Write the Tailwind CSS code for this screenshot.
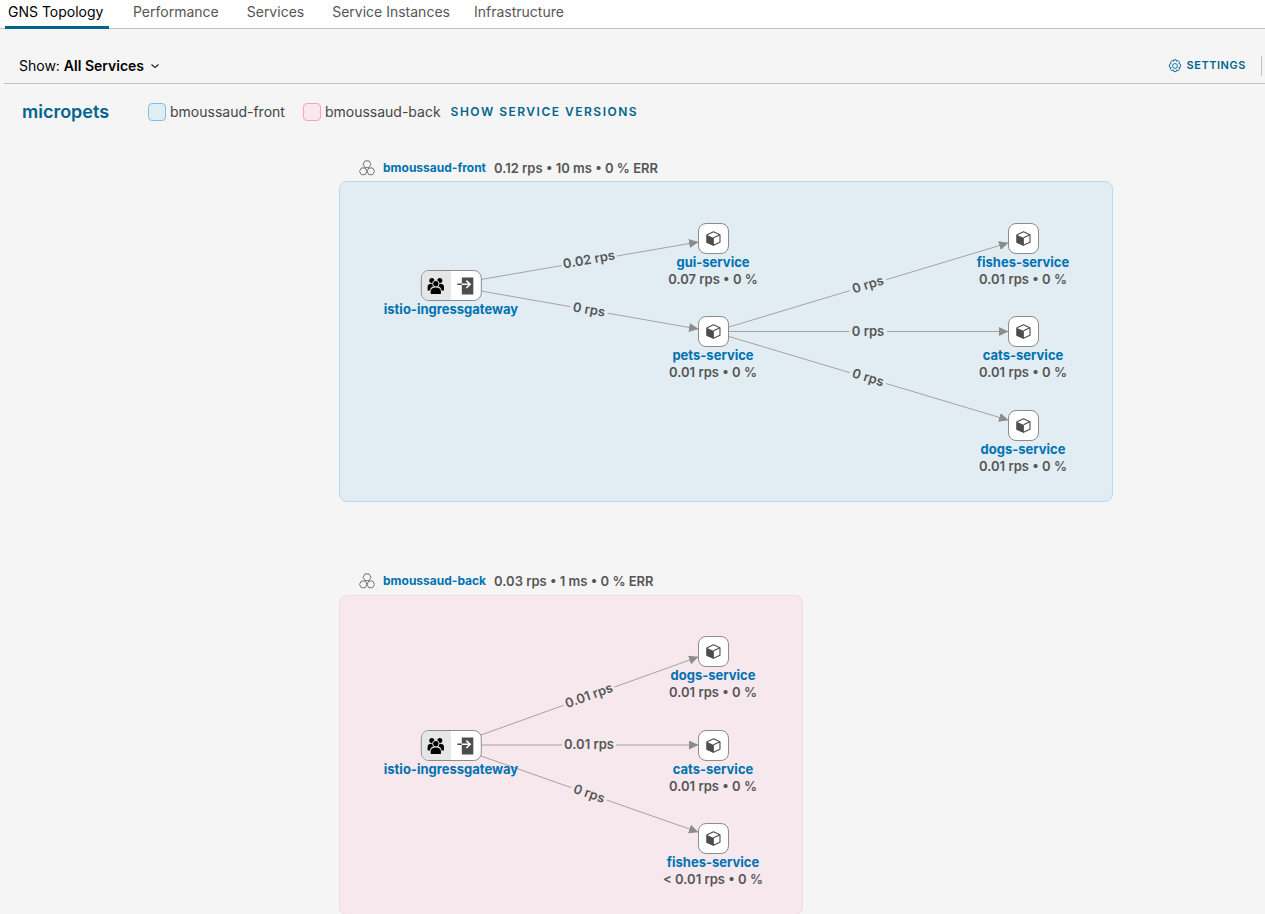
<!DOCTYPE html>
<html lang="en">
<head>
<meta charset="utf-8">
<title>GNS Topology</title>
<script src="https://cdn.jsdelivr.net/npm/@tailwindcss/browser@4"></script>
</head>
<body class="min-h-screen bg-[#f5f5f5] font-['Inter','Open_Sans',sans-serif] text-sm text-black">
<svg class="hidden" aria-hidden="true">
  <symbol id="cube" viewBox="0 0 16 16">
    <path d="M8 .9 14.9 4v8L8 15.2 1.1 12V4z" fill="none" stroke="#4d4d4d" stroke-width="1.200" stroke-linejoin="round"/>
    <path d="M.5 4 8.400 7.4V15.800L.5 12.400z" fill="#4d4d4d"/>
    <path d="M8 7.3 14.9 4" fill="none" stroke="#4d4d4d" stroke-width="1.200"/>
  </symbol>
  <symbol id="cluster" viewBox="0 0 16 16">
    <g fill="none" stroke="#737373" stroke-width="1" stroke-linejoin="round">
      <path d="M6 .9h4l2 3.4-2 3.4H6L4 4.300z"/>
      <path d="M2.300 8h3.900l1.800 3.300-1.800 3.400H2.300L.500 11.300z"/>
      <path d="M9.800 8h3.900l1.800 3.300-1.800 3.400H9.800L8 11.300z"/>
    </g>
  </symbol>
  <symbol id="users" viewBox="0 0 18 18">
    <circle cx="5" cy="3.500" r="2.500"/>
    <circle cx="13" cy="3.500" r="2.500"/>
    <path d="M.8 13.500V9.800C.8 7.800 2.300 6.800 4.500 6.800H7v2.400C4.800 9.800 3.400 11.300 3.200 13.500zM17.200 13.500V9.800c0-2-1.500-3-3.700-3H11v2.400c2.200.6 3.600 2.100 3.800 4.300z"/>
    <circle cx="9" cy="6.700" r="3.200" stroke="#e6e6e6" stroke-width="1"/>
    <path d="M3.900 17v-2.800c0-2.300 1.900-3.700 5.100-3.700s5.100 1.400 5.100 3.700V17z"/>
  </symbol>
  <symbol id="ingress" viewBox="0 0 18 18">
    <path d="M5 .5h11.500v17H5z" fill="#4d4d4d"/>
    <path d="M4.500 7.300h9M9.500 3.600l3.900 3.700-3.900 3.700" fill="none" stroke="#fff" stroke-width="1.500"/>
    <path d="M.5 7.300H5" fill="none" stroke="#4d4d4d" stroke-width="1.500"/>
  </symbol>
</svg>

<nav class="flex h-[29px] gap-5 border-b border-[#c1c1c1] bg-white pl-[5px] text-[#565656]">
  <a href="#" aria-current="page" class="h-[29px] min-w-[104px] border-b-3 border-[#00648f] px-[3px] leading-6 text-black">GNS Topology</a>
  <a href="#" class="px-1 leading-6">Performance</a>
  <a href="#" class="px-1 leading-6">Services</a>
  <a href="#" class="px-1 leading-6">Service Instances</a>
  <a href="#" class="leading-6">Infrastructure</a>
</nav>

<div class="ml-1 flex h-[55px] items-end justify-between border-b border-[#c1c1c1] pl-[15px] pr-[3px] pb-[7px]">
  <button type="button" class="flex items-center gap-[5px] leading-5">
    <span>Show: <b class="font-semibold">All Services</b></span>
    <svg class="size-3" viewBox="0 0 12 12" fill="none" stroke="#222" stroke-width="1.200"><path d="m2.500 4.500 3.500 3 3.500-3"/></svg>
  </button>
  <div class="flex h-5 items-center border-r border-[#c1c1c1] pr-[15px]">
    <button type="button" class="flex items-center gap-1 text-[11px] font-semibold tracking-wider text-[#00648f]">
      <svg class="size-[14px]" viewBox="0 0 16 16" fill="none" stroke="#00648f">
        <circle cx="8" cy="8" r="2.800"/>
        <path stroke-linejoin="round" d="M6.700.8h2.600l.5 1.900 1.700-.9 1.900 1.800-1 1.800 2 .6v3.200l-2 .6 1 1.800-1.900 1.800-1.700-.9-.5 1.900H6.700l-.5-1.900-1.700.9-1.900-1.800 1-1.800-2-.6V6l2-.6-1-1.800 1.900-1.800 1.700.9z"/>
      </svg>
      SETTINGS
    </button>
  </div>
</div>

<div class="flex h-14 items-center pl-[22px] text-[#454545]">
  <h1 class="w-[126px] text-lg font-semibold text-[#00648f]">micropets</h1>
  <span class="flex items-center gap-1"><i class="size-[18px] rounded border border-[#7cc1e3] bg-[#e1edf2]"></i>bmoussaud-front</span>
  <span class="ml-[18px] flex items-center gap-1"><i class="size-[18px] rounded border border-[#f5a6c4] bg-[#f6e8ed]"></i>bmoussaud-back</span>
  <button type="button" class="ml-[10px] text-xs font-semibold tracking-[1.5px] text-[#00648f]">SHOW SERVICE VERSIONS</button>
</div>

<main class="relative h-[774px] min-w-[1120px] overflow-hidden text-xs font-semibold text-[#565656]">
  <section class="absolute left-[339px] top-[41px] h-[321px] w-[774px] rounded-lg border border-[#b5dcee] bg-[#e1edf2]"></section>
  <section class="absolute left-[339px] top-[455px] h-[320px] w-[464px] rounded-lg border border-[#f5d9e2] bg-[#f6e8ed]"></section>

  <svg class="absolute left-0 top-0 h-[774px] w-[1120px]" viewBox="0 140 1120 774">
    <defs>
      <marker id="arrow" markerUnits="userSpaceOnUse" markerWidth="10" markerHeight="10" refX="9" refY="4.500" orient="auto"><path d="M0 0 9.500 4.500 0 9z" fill="#8c8c8c"/></marker>
    </defs>
    <g stroke="#a3a3a3" stroke-width="1">
      <path d="M481 279.500 698 242" marker-end="url(#arrow)"/>
      <path d="M481 291 698 329" marker-end="url(#arrow)"/>
      <path d="M729 327 1008 243" marker-end="url(#arrow)"/>
      <path d="M729 331.500H1008" marker-end="url(#arrow)"/>
      <path d="M729 336.500 1008 420" marker-end="url(#arrow)"/>
      <path d="M481 735 698 657" marker-end="url(#arrow)"/>
      <path d="M481 745H698" marker-end="url(#arrow)"/>
      <path d="M481 756 698 832" marker-end="url(#arrow)"/>
    </g>
    <g fill="#e1edf2">
      <rect x="-28" y="-8" width="56" height="16" transform="translate(589 260) rotate(-10)"/>
      <rect x="-19" y="-8" width="38" height="16" transform="translate(589 310) rotate(10)"/>
      <rect x="-19" y="-8" width="38" height="16" transform="translate(868 285) rotate(-17)"/>
      <rect x="-19" y="-8" width="38" height="16" transform="translate(868 331)"/>
      <rect x="-19" y="-8" width="38" height="16" transform="translate(868 378) rotate(17)"/>
    </g>
    <g fill="#f6e8ed">
      <rect x="-27" y="-8" width="54" height="16" transform="translate(589 696) rotate(-20)"/>
      <rect x="-27" y="-8" width="54" height="16" transform="translate(589 745)"/>
      <rect x="-19" y="-8" width="38" height="16" transform="translate(589 794) rotate(19)"/>
    </g>
    <g fill="#565656" text-anchor="middle" class="text-[13px]">
      <text y="4" transform="translate(589 260) rotate(-10)">0.02 rps</text>
      <text y="4" transform="translate(589 310) rotate(10)">0 rps</text>
      <text y="4" transform="translate(868 285) rotate(-17)">0 rps</text>
      <text y="5" transform="translate(868 331)">0 rps</text>
      <text y="4" transform="translate(868 378) rotate(17)">0 rps</text>
      <text y="4" transform="translate(589 696) rotate(-20)">0.01 rps</text>
      <text y="4" transform="translate(589 745)">0.01 rps</text>
      <text y="4" transform="translate(589 794) rotate(19)">0 rps</text>
    </g>
  </svg>

  <div class="absolute left-[359px] top-[18px] flex items-center gap-2 leading-5">
    <svg class="size-4"><use href="#cluster"/></svg>
    <a href="#" class="font-bold text-[#0072b1]">bmoussaud-front</a>
    <span class="text-[13px]">0.12 rps • 10 ms • 0 % ERR</span>
  </div>
  <div class="absolute left-[359px] top-[431px] flex items-center gap-2 leading-5">
    <svg class="size-4"><use href="#cluster"/></svg>
    <a href="#" class="font-bold text-[#0072b1]">bmoussaud-back</a>
    <span class="text-[13px]">0.03 rps • 1 ms • 0 % ERR</span>
  </div>

  <div class="absolute left-[451px] top-[130px] flex -translate-x-1/2 flex-col items-center">
    <div class="flex h-[31px] w-[61px] overflow-hidden rounded-lg border border-[#8c8c8c] bg-white">
      <span class="flex flex-1 items-center justify-center bg-[#e6e6e6]"><svg class="size-[18px]"><use href="#users"/></svg></span>
      <span class="flex flex-1 items-center justify-center"><svg class="size-[18px]"><use href="#ingress"/></svg></span>
    </div>
    <a href="#" class="text-[13px] font-bold leading-4 text-[#0072b1]">istio-ingressgateway</a>
  </div>
  <div class="absolute left-[451px] top-[590px] flex -translate-x-1/2 flex-col items-center">
    <div class="flex h-[31px] w-[61px] overflow-hidden rounded-lg border border-[#8c8c8c] bg-white">
      <span class="flex flex-1 items-center justify-center bg-[#e6e6e6]"><svg class="size-[18px]"><use href="#users"/></svg></span>
      <span class="flex flex-1 items-center justify-center"><svg class="size-[18px]"><use href="#ingress"/></svg></span>
    </div>
    <a href="#" class="text-[13px] font-bold leading-4 text-[#0072b1]">istio-ingressgateway</a>
  </div>

  <div class="absolute left-[713px] top-[83px] flex w-[120px] -translate-x-1/2 flex-col items-center text-[13px] leading-[17px]">
    <div class="flex size-[31px] items-center justify-center rounded-lg border border-[#8c8c8c] bg-white"><svg class="size-[15px]"><use href="#cube"/></svg></div>
    <a href="#" class="font-bold text-[#0072b1]">gui-service</a>
    <span>0.07 rps • 0 %</span>
  </div>
  <div class="absolute left-[713px] top-[176px] flex w-[120px] -translate-x-1/2 flex-col items-center text-[13px] leading-[17px]">
    <div class="flex size-[31px] items-center justify-center rounded-lg border border-[#8c8c8c] bg-white"><svg class="size-[15px]"><use href="#cube"/></svg></div>
    <a href="#" class="font-bold text-[#0072b1]">pets-service</a>
    <span>0.01 rps • 0 %</span>
  </div>
  <div class="absolute left-[1023px] top-[83px] flex w-[120px] -translate-x-1/2 flex-col items-center text-[13px] leading-[17px]">
    <div class="flex size-[31px] items-center justify-center rounded-lg border border-[#8c8c8c] bg-white"><svg class="size-[15px]"><use href="#cube"/></svg></div>
    <a href="#" class="font-bold text-[#0072b1]">fishes-service</a>
    <span>0.01 rps • 0 %</span>
  </div>
  <div class="absolute left-[1023px] top-[176px] flex w-[120px] -translate-x-1/2 flex-col items-center text-[13px] leading-[17px]">
    <div class="flex size-[31px] items-center justify-center rounded-lg border border-[#8c8c8c] bg-white"><svg class="size-[15px]"><use href="#cube"/></svg></div>
    <a href="#" class="font-bold text-[#0072b1]">cats-service</a>
    <span>0.01 rps • 0 %</span>
  </div>
  <div class="absolute left-[1023px] top-[270px] flex w-[120px] -translate-x-1/2 flex-col items-center text-[13px] leading-[17px]">
    <div class="flex size-[31px] items-center justify-center rounded-lg border border-[#8c8c8c] bg-white"><svg class="size-[15px]"><use href="#cube"/></svg></div>
    <a href="#" class="font-bold text-[#0072b1]">dogs-service</a>
    <span>0.01 rps • 0 %</span>
  </div>
  <div class="absolute left-[713px] top-[496px] flex w-[120px] -translate-x-1/2 flex-col items-center text-[13px] leading-[17px]">
    <div class="flex size-[31px] items-center justify-center rounded-lg border border-[#8c8c8c] bg-white"><svg class="size-[15px]"><use href="#cube"/></svg></div>
    <a href="#" class="font-bold text-[#0072b1]">dogs-service</a>
    <span>0.01 rps • 0 %</span>
  </div>
  <div class="absolute left-[713px] top-[590px] flex w-[120px] -translate-x-1/2 flex-col items-center text-[13px] leading-[17px]">
    <div class="flex size-[31px] items-center justify-center rounded-lg border border-[#8c8c8c] bg-white"><svg class="size-[15px]"><use href="#cube"/></svg></div>
    <a href="#" class="font-bold text-[#0072b1]">cats-service</a>
    <span>0.01 rps • 0 %</span>
  </div>
  <div class="absolute left-[713px] top-[683px] flex w-[120px] -translate-x-1/2 flex-col items-center text-[13px] leading-[17px]">
    <div class="flex size-[31px] items-center justify-center rounded-lg border border-[#8c8c8c] bg-white"><svg class="size-[15px]"><use href="#cube"/></svg></div>
    <a href="#" class="font-bold text-[#0072b1]">fishes-service</a>
    <span>&lt; 0.01 rps • 0 %</span>
  </div>
</main>
</body>
</html>
